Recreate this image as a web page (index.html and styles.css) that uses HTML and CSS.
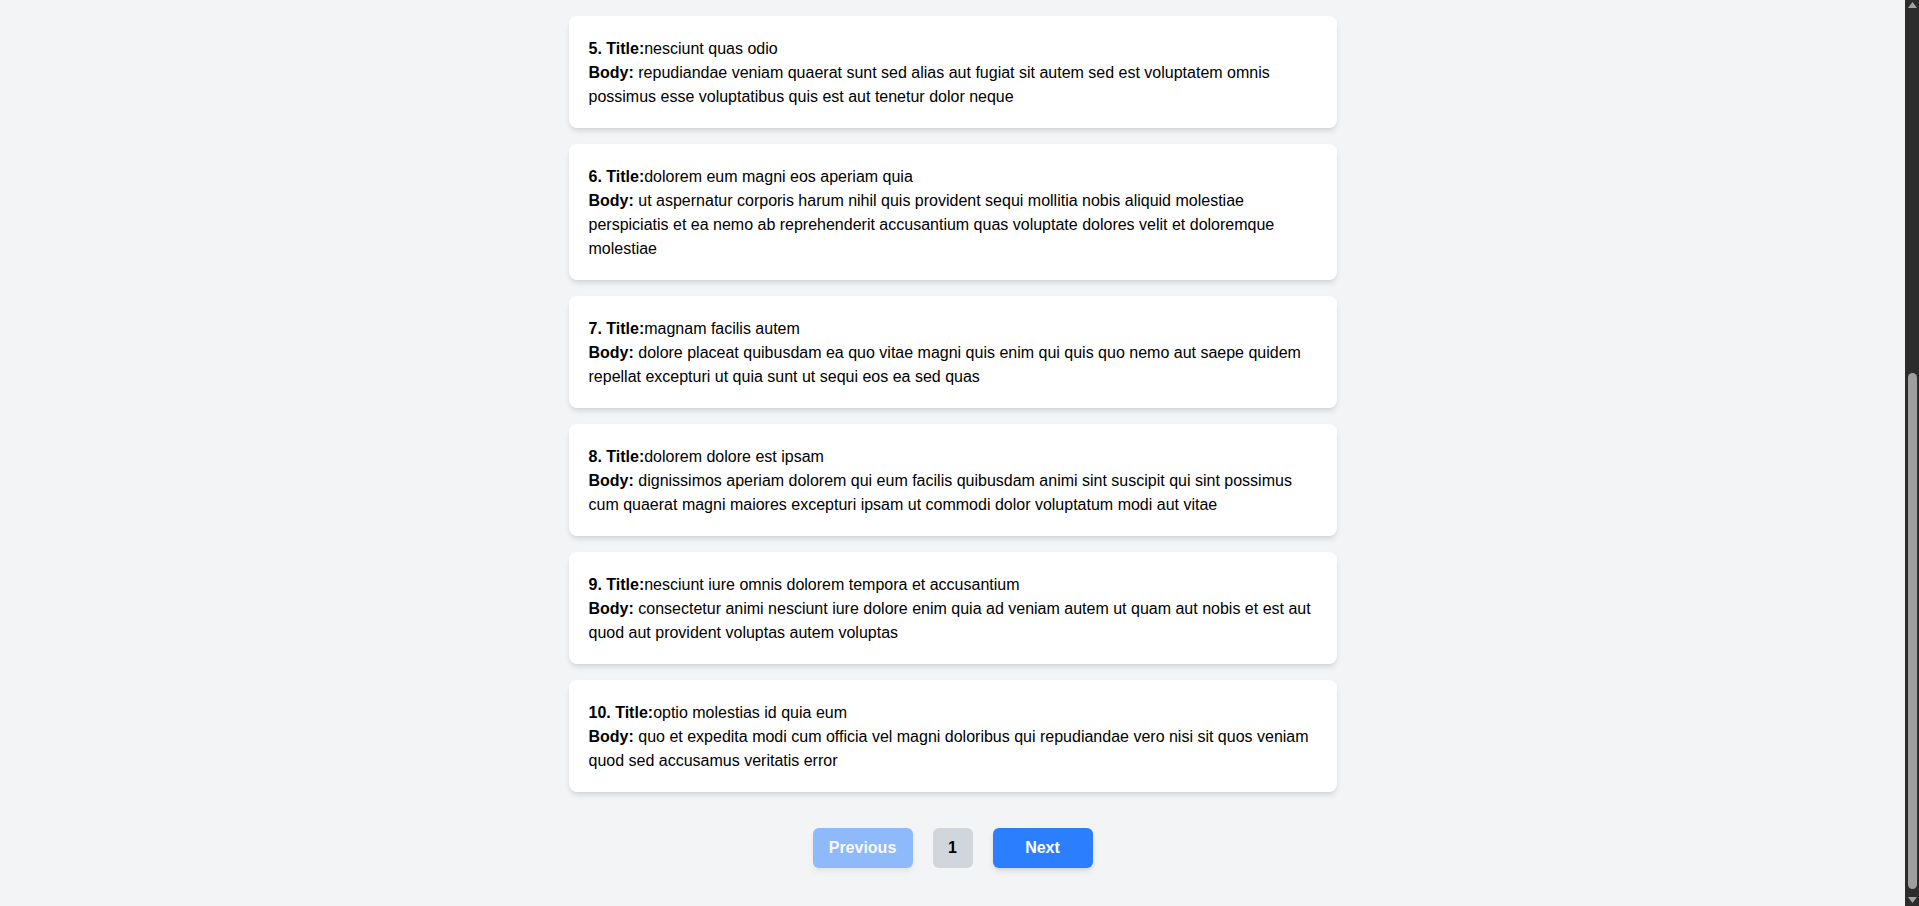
FILE: index.html
```html
<!DOCTYPE html>
<html lang="en">
<head>
<meta charset="utf-8">
<title>Posts</title>
<link rel="stylesheet" href="styles.css">
</head>
<body>
<div class="window">
  <main class="page">
    <section class="post-list">
      <div class="card card-tail" aria-hidden="true"></div>
      <article class="card">
        <p class="line"><strong>5. Title:</strong>nesciunt quas odio</p>
        <p class="line"><strong>Body:</strong> repudiandae veniam quaerat sunt sed alias aut fugiat sit autem sed est voluptatem omnis possimus esse voluptatibus quis est aut tenetur dolor neque</p>
      </article>
      <article class="card">
        <p class="line"><strong>6. Title:</strong>dolorem eum magni eos aperiam quia</p>
        <p class="line"><strong>Body:</strong> ut aspernatur corporis harum nihil quis provident sequi mollitia nobis aliquid molestiae perspiciatis et ea nemo ab reprehenderit accusantium quas voluptate dolores velit et doloremque molestiae</p>
      </article>
      <article class="card">
        <p class="line"><strong>7. Title:</strong>magnam facilis autem</p>
        <p class="line"><strong>Body:</strong> dolore placeat quibusdam ea quo vitae magni quis enim qui quis quo nemo aut saepe quidem repellat excepturi ut quia sunt ut sequi eos ea sed quas</p>
      </article>
      <article class="card">
        <p class="line"><strong>8. Title:</strong>dolorem dolore est ipsam</p>
        <p class="line"><strong>Body:</strong> dignissimos aperiam dolorem qui eum facilis quibusdam animi sint suscipit qui sint possimus cum quaerat magni maiores excepturi ipsam ut commodi dolor voluptatum modi aut vitae</p>
      </article>
      <article class="card">
        <p class="line"><strong>9. Title:</strong>nesciunt iure omnis dolorem tempora et accusantium</p>
        <p class="line"><strong>Body:</strong> consectetur animi nesciunt iure dolore enim quia ad veniam autem ut quam aut nobis et est aut quod aut provident voluptas autem voluptas</p>
      </article>
      <article class="card">
        <p class="line"><strong>10. Title:</strong>optio molestias id quia eum</p>
        <p class="line"><strong>Body:</strong> quo et expedita modi cum officia vel magni doloribus qui repudiandae vero nisi sit quos veniam quod sed accusamus veritatis error</p>
      </article>
    </section>
    <nav class="pager">
      <button class="btn btn-nav btn-disabled" type="button">Previous</button>
      <span class="page-num">1</span>
      <button class="btn btn-nav" type="button">Next</button>
    </nav>
  </main>
  <aside class="scrollbar" aria-hidden="true">
    <div class="sb-btn sb-up">
      <svg width="9" height="6" viewBox="0 0 9 6"><polygon points="4.5,0 9,6 0,6" fill="#a3a3a3"/></svg>
    </div>
    <div class="sb-track">
      <div class="sb-thumb"></div>
    </div>
    <div class="sb-btn sb-down">
      <svg width="9" height="6" viewBox="0 0 9 6"><polygon points="0,0 9,0 4.5,6" fill="#a3a3a3"/></svg>
    </div>
  </aside>
</div>
</body>
</html>
```
FILE: styles.css
```css
html, body {
  margin: 0;
  background: #f3f4f6;
}
body {
  font-family: "Liberation Sans", Arial, sans-serif;
  font-size: 16px;
  line-height: 24px;
  color: #000;
}
.window {
  display: flex;
  height: 906px;
  overflow: hidden;
}
.page {
  flex: 1;
  padding: 0 0 38px;
}
.post-list {
  width: 768px;
  margin: 0 auto;
  display: flex;
  flex-direction: column;
  gap: 16px;
}
.card {
  background: #fff;
  border-radius: 8px;
  padding: 21px 20px 19px;
  box-shadow: 0 4px 6px -1px rgba(0, 0, 0, 0.1), 0 2px 4px -2px rgba(0, 0, 0, 0.1);
}
.card-tail {
  height: 0;
  padding: 0;
  border-radius: 0;
  box-shadow: 0 1px 4px rgba(0, 0, 0, 0.12);
}
.line {
  margin: 0;
}
.line strong {
  font-weight: 700;
}
.pager {
  margin-top: 36px;
  display: flex;
  justify-content: center;
  align-items: center;
  gap: 20px;
}
.btn {
  font: 700 16px/24px "Liberation Sans", Arial, sans-serif;
  border: 0;
  padding: 0;
  cursor: pointer;
}
.btn-nav {
  width: 100px;
  height: 40px;
  border-radius: 6px;
  background: #2b7fff;
  color: #fff;
  box-shadow: 0 4px 6px -1px rgba(0, 0, 0, 0.1), 0 2px 4px -2px rgba(0, 0, 0, 0.1);
}
.btn-disabled {
  opacity: 0.5;
  cursor: default;
}
.page-num {
  width: 40px;
  height: 40px;
  border-radius: 6px;
  background: #d1d5dc;
  font-weight: 700;
  display: flex;
  align-items: center;
  justify-content: center;
}
.scrollbar {
  width: 14px;
  flex: none;
  background: #2c2c2c;
  display: flex;
  flex-direction: column;
}
.sb-btn {
  height: 17px;
  display: flex;
  justify-content: center;
  padding-left: 1px;
}
.sb-up {
  align-items: flex-start;
  padding-top: 2px;
  box-sizing: border-box;
}
.sb-down {
  align-items: flex-end;
  padding-bottom: 3px;
  box-sizing: border-box;
}
.sb-track {
  flex: 1;
  display: flex;
  flex-direction: column;
  justify-content: flex-end;
  padding: 0 2px 0 3px;
}
.sb-thumb {
  height: 516px;
  background: #9f9f9f;
  border-radius: 5px;
}
```
